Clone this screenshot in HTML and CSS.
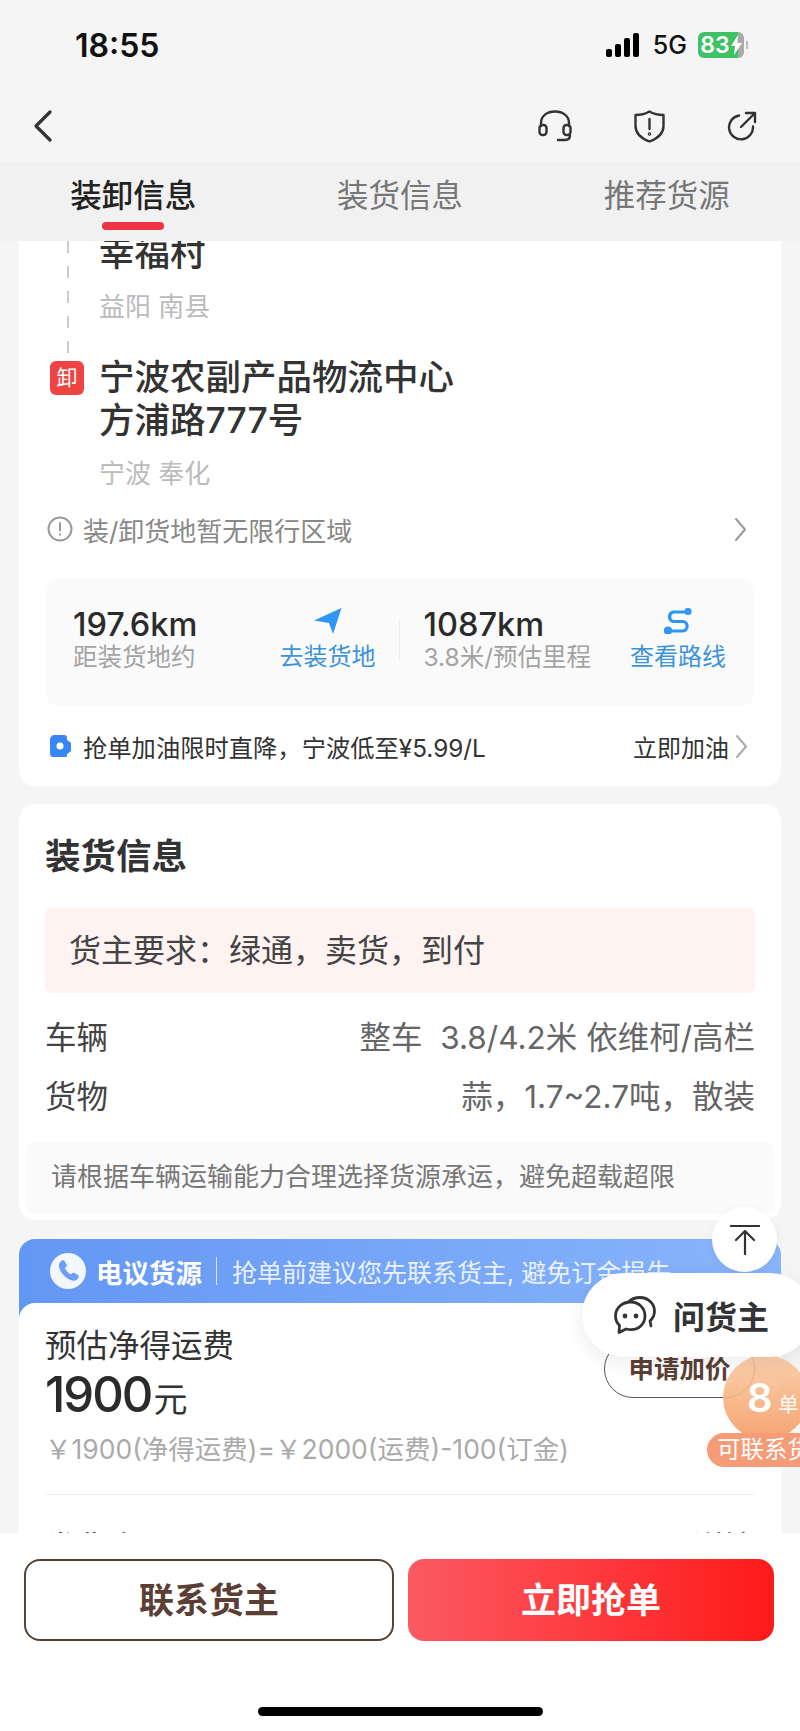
FILE: index.html
```html
<!DOCTYPE html>
<html lang="zh-CN">

<head>
  <meta charset="UTF-8" />
  <meta name="viewport" content="width=device-width, initial-scale=1.0" />
  <title>装卸信息</title>
  <link rel="stylesheet" href="styles.css">
</head>

<body>
  <div class="phone">
    <div class="status-bar">
      <span class="time">18:55</span>
      <div class="status-right">
        <svg class="signal" width="34" height="24" viewBox="0 0 34 24" fill="#000">
          <rect x="0" y="16" width="6" height="8" rx="2" />
          <rect x="9" y="11" width="6" height="13" rx="2" />
          <rect x="18" y="5" width="6" height="19" rx="2" />
          <rect x="27" y="0" width="6" height="24" rx="2" />
        </svg>
        <span class="net">5G</span>
        <div class="battery">
          <span>83</span>
          <svg width="11" height="20" viewBox="0 0 11 20" fill="#fff">
            <path d="M7 0 0 11h4l-1 9 8-12H6.500z" />
          </svg>
        </div>
        <i class="battery-nub"></i>
      </div>
    </div>

    <div class="nav">
      <svg width="20" height="32" viewBox="0 0 20 32" fill="none" stroke="#333" stroke-width="3.200" stroke-linecap="round" stroke-linejoin="round">
        <path d="M17 2 3 16l14 14" />
      </svg>
      <div class="nav-icons">
        <svg width="34" height="32" viewBox="0 0 34 32" fill="none" stroke="#333" stroke-width="2.400" stroke-linecap="round">
          <path d="M3 16v-3C3 6 9 1.500 17 1.500S31 6 31 13v3" />
          <rect x="1.500" y="15" width="7" height="10" rx="3" />
          <rect x="25.500" y="15" width="7" height="10" rx="3" />
          <path d="M32 25c0 3-2 5-5 5h-7" />
        </svg>
        <svg width="31" height="33" viewBox="0 0 31 33" fill="none" stroke="#333" stroke-width="2.400" stroke-linejoin="round" stroke-linecap="round">
          <path d="M15.500 1.500c4 2.500 8.500 3.500 14 3.500v11c0 8-6 12.500-14 15.500C7.500 28.500 1.500 24 1.500 16V5c5.500 0 10-1 14-3.500z" />
          <path d="M15.500 9v10" />
          <circle cx="15.500" cy="24" r=".6" />
        </svg>
        <svg width="30" height="30" viewBox="0 0 30 30" fill="none" stroke="#333" stroke-width="2.400" stroke-linecap="round" stroke-linejoin="round">
          <path d="M12 4.500a12 12 0 1 0 14 11" />
          <path d="M14 16 28 2M19 2h9v9" />
        </svg>
      </div>
    </div>

    <div class="tabs">
      <div class="tab tab-active">装卸信息<i class="tab-line"></i></div>
      <div class="tab">装货信息</div>
      <div class="tab">推荐货源</div>
    </div>

    <div class="content">
      <section class="card route-card">
        <div class="route">
          <div class="route-side"><i class="route-dash"></i></div>
          <div class="stop stop-first">
            <div class="stop-name">幸福村</div>
            <div class="stop-city">益阳 南县</div>
          </div>
          <div class="route-side"><span class="badge">卸</span></div>
          <div class="stop">
            <div class="stop-name">宁波农副产品物流中心<br>方浦路777号</div>
            <div class="stop-city">宁波 奉化</div>
          </div>
        </div>

        <div class="limit-row">
          <svg width="26" height="26" viewBox="0 0 26 26" fill="none" stroke="#999" stroke-width="2" stroke-linecap="round">
            <circle cx="13" cy="13" r="11.500" />
            <path d="M13 7v7.500M13 18.500v.2" />
          </svg>
          <span class="limit-text">装/卸货地暂无限行区域</span>
          <svg class="chevron" width="13" height="25" viewBox="0 0 13 25" fill="none" stroke="#999" stroke-width="2" stroke-linecap="round" stroke-linejoin="round">
            <path d="M2 2l9 10.500L2 23" />
          </svg>
        </div>

        <div class="panel">
          <div class="leg leg-first">
            <div>
              <div class="leg-value">197.6km</div>
              <div class="leg-sub">距装货地约</div>
            </div>
            <div class="leg-action">
              <svg width="28" height="26" viewBox="0 0 28 26" fill="#2f96f5">
                <path d="M27.500 0 0 12.500l15 2.500 4 11z" />
              </svg>
              <span>去装货地</span>
            </div>
          </div>
          <i class="leg-divider"></i>
          <div class="leg">
            <div>
              <div class="leg-value">1087km</div>
              <div class="leg-sub">3.8米/预估里程</div>
            </div>
            <div class="leg-action">
              <svg width="28" height="26" viewBox="0 0 28 26" fill="none" stroke="#2f96f5" stroke-width="3.200" stroke-linecap="round">
                <path d="M21 4H9a5 5 0 0 0 0 9.500h10a4.800 4.800 0 0 1 0 9.500H6" />
                <circle cx="24" cy="3.500" r="2" />
                <circle cx="4" cy="22.500" r="2.500" fill="#2f96f5" />
              </svg>
              <span>查看路线</span>
            </div>
          </div>
        </div>

        <div class="fuel-row">
          <svg width="21" height="22" viewBox="0 0 21 22">
            <path d="M5 0h9c2 0 3 1 3 3v2l3 2c.7.500 1 1 1 2v6c0 1-.300 1.500-1 2l-3 2v1c0 2-1 3-3 3H5c-3 0-5-2-5-5V5c0-3 2-5 5-5z" fill="#3a86f6" />
            <circle cx="10" cy="11" r="3.500" fill="#fff" />
          </svg>
          <span class="fuel-text">抢单加油限时直降，宁波低至¥5.99/L</span>
          <span class="fuel-link">立即加油</span>
          <svg class="chevron" width="13" height="25" viewBox="0 0 13 25" fill="none" stroke="#aaa" stroke-width="2" stroke-linecap="round" stroke-linejoin="round">
            <path d="M2 2l9 10.500L2 23" />
          </svg>
        </div>
      </section>

      <section class="card load-card">
        <h3 class="card-title">装货信息</h3>
        <div class="demand">货主要求：绿通，卖货，到付</div>
        <div class="info-row">
          <span class="info-label">车辆</span>
          <span class="info-value">整车&nbsp; 3.8/4.2米 依维柯/高栏</span>
        </div>
        <div class="info-row info-row-next">
          <span class="info-label">货物</span>
          <span class="info-value">蒜，1.7~2.7吨，散装</span>
        </div>
        <div class="note">请根据车辆运输能力合理选择货源承运，避免超载超限</div>
      </section>

      <section class="fare-card">
        <div class="fare-banner">
          <span class="phone-dot">
            <svg width="24" height="24" viewBox="0 0 24 24" fill="#6f9ff5">
              <path d="M6 1.500c1-.5 2-.3 2.600.6l2 3.400c.4.800.3 1.600-.3 2.200L9 9c.8 2.500 3 5 6 6.300l1.500-1.200c.7-.5 1.500-.6 2.200-.1l3.200 2.100c.9.600 1.100 1.700.5 2.600-1.200 2-3 3.300-5 3-7-1-13-7.500-14.400-14C2.500 5 3.800 2.800 6 1.500z" />
            </svg>
          </span>
          <span class="banner-name">电议货源</span>
          <i class="banner-sep"></i>
          <span class="banner-text">抢单前建议您先联系货主, 避免订金损失</span>
        </div>
        <div class="fare-body">
          <div class="fare-head">
            <div>
              <div class="fare-title">预估净得运费</div>
              <div class="fare-price"><span class="fare-num">1900</span><span class="fare-unit">元</span></div>
            </div>
            <div class="raise-btn">申请加价</div>
          </div>
          <div class="fare-formula">￥1900(净得运费)=￥2000(运费)-100(订金)</div>
          <div class="fare-line"></div>
          <div class="info-row fare-next">
            <span class="info-label">发货人</span>
            <span class="info-value">详情</span>
          </div>
        </div>
      </section>
    </div>

    <div class="bottom-bar">
      <div class="actions">
        <div class="btn btn-outline">联系货主</div>
        <div class="btn btn-red">立即抢单</div>
      </div>
      <i class="home-bar"></i>
    </div>

    <div class="to-top">
      <svg width="30" height="30" viewBox="0 0 30 30" fill="none" stroke="#333" stroke-width="2.200" stroke-linecap="round" stroke-linejoin="round">
        <path d="M1 1h28M15 29V7M6 15l9-9 9 9" />
      </svg>
    </div>

    <div class="orders">
      <span class="orders-num">8</span><span class="orders-unit">单</span>
    </div>
    <div class="orders-pill">可联系货主</div>

    <div class="ask">
      <svg width="42" height="38" viewBox="0 0 42 38" fill="none" stroke="#333" stroke-width="2.800" stroke-linecap="round" stroke-linejoin="round">
        <path d="M15 5.500C18 2.500 22 1.500 26 1.500c8 0 14.500 6 14.500 13.500 0 4-1.800 7.500-4.500 10l1 5" />
        <path d="M17 6C8 6 1.500 12 1.500 20c0 4 1.500 7 4 9.500l-.5 7 7-3.500c1.500.5 3 .7 5 .7 8 0 14-6 14-13.700S25 6 17 6z" />
        <circle cx="11" cy="20" r="1" fill="#333" />
        <circle cx="22" cy="20" r="1" fill="#333" />
      </svg>
      <span>问货主</span>
    </div>
  </div>
</body>

</html>
```

FILE: styles.css
```css
* {
  box-sizing: border-box;
}

body {
  margin: 0;
  font-family: "Inter", "Noto Sans CJK SC", sans-serif;
  color: #333;
}

i {
  display: block;
}

.phone {
  position: relative;
  width: 800px;
  height: 1731px;
  overflow: hidden;
  display: flex;
  flex-direction: column;
  background: #f5f5f5;
}

/* status bar */
.status-bar {
  height: 90px;
  flex: none;
  display: flex;
  align-items: center;
  justify-content: space-between;
  padding: 0 52px 0 75px;
}

.time {
  font-size: 32px;
  font-weight: 600;
  color: #111;
}

.status-right {
  display: flex;
  align-items: center;
}

.net {
  margin: 0 11px 0 13px;
  font-size: 25px;
  font-weight: 500;
  color: #111;
}

.battery {
  width: 46px;
  height: 26px;
  display: flex;
  align-items: center;
  justify-content: center;
  gap: 1px;
  border-radius: 6px;
  background: linear-gradient(90deg, #3fc266 87%, #aaa 87%);
  color: #fff;
  font-size: 23px;
  font-weight: 600;
}

.battery-nub {
  width: 2px;
  height: 8px;
  margin-left: 2px;
  background: #bbb;
}

/* nav */
.nav {
  height: 72px;
  flex: none;
  display: flex;
  align-items: center;
  justify-content: space-between;
  padding: 0 43px 0 33px;
}

.nav-icons {
  display: flex;
  align-items: center;
  gap: 62px;
}

/* tabs */
.tabs {
  height: 79px;
  flex: none;
  display: flex;
  background: #f1f1f1;
}

.tab {
  flex: 1;
  padding-top: 14px;
  line-height: 40px;
  font-size: 31.500px;
  text-align: center;
  color: #777;
}

.tab-active {
  color: #222;
  font-weight: 500;
}

.tab-line {
  width: 62px;
  height: 8px;
  margin: 6px auto 0;
  border-radius: 4px;
  background: #ee3344;
}

/* scrolling part */
.content {
  flex: 1;
  min-height: 0;
  overflow: hidden;
  padding: 0 19px;
}

.card {
  background: #fff;
  border-radius: 16px;
}

.route-card {
  height: 545px;
  padding-right: 27px;
  border-radius: 0 0 16px 16px;
}

.route {
  display: grid;
  grid-template-columns: 80px 1fr;
}

.route-dash {
  width: 2px;
  height: 115px;
  margin-left: 48px;
  background: repeating-linear-gradient(180deg, #ccc 0, #ccc 12px, transparent 12px, transparent 25px);
}

.badge {
  display: block;
  width: 34px;
  height: 34px;
  margin: 5px 0 0 31px;
  border-radius: 6px;
  background: #ee4444;
  color: #fff;
  font-size: 21px;
  line-height: 34px;
  text-align: center;
}

.stop-first {
  margin-top: -9px;
  padding-bottom: 31px;
}

.stop-name {
  font-size: 35.500px;
  line-height: 43px;
  font-weight: 500;
  color: #333;
}

.stop-city {
  margin-top: 15px;
  font-size: 26px;
  line-height: 34px;
  color: #bbb;
}

.limit-row {
  height: 40px;
  margin: 18px 7px 0 0;
  padding-left: 28px;
  display: flex;
  align-items: center;
}

.limit-text {
  margin-left: 10px;
  font-size: 26px;
  color: #888;
}

.chevron {
  margin-left: auto;
  flex: none;
}

.panel {
  height: 127px;
  margin: 30px 0 0 27px;
  padding-top: 29px;
  display: flex;
  align-items: flex-start;
  border-radius: 12px;
  background: #fafafa;
}

.leg {
  flex: 1;
  display: flex;
  justify-content: space-between;
  padding: 0 28px 0 24px;
}

.leg-first {
  padding: 0 23px 0 27px;
}

.leg-divider {
  width: 1px;
  height: 38px;
  margin-top: 13px;
  background: #ebebeb;
}

.leg-value {
  font-size: 32.500px;
  line-height: 34px;
  font-weight: 500;
  color: #2b2b2b;
}

.leg-sub {
  font-size: 24.500px;
  line-height: 30px;
  color: #a3a3a3;
}

.leg-action {
  display: flex;
  flex-direction: column;
  align-items: center;
  gap: 8px;
  font-size: 24px;
  line-height: 30px;
  color: #3d93d8;
}

.fuel-row {
  height: 40px;
  margin: 20px 6px 0 31px;
  display: flex;
  align-items: center;
}

.fuel-text {
  margin-left: 12px;
  font-size: 24.300px;
  color: #333;
}

.fuel-link {
  margin-left: auto;
  font-size: 24px;
  color: #333;
}

.fuel-row .chevron {
  margin-left: 6px;
}

.load-card {
  margin-top: 18px;
  padding: 33px 26px 7px;
}

.card-title {
  margin: 0;
  font-size: 35.500px;
  line-height: 40px;
  font-weight: 700;
  color: #333;
}

.demand {
  height: 85px;
  margin-top: 31px;
  padding-left: 24px;
  border-radius: 6px;
  background: #fff3f2;
  font-size: 32px;
  line-height: 85px;
  color: #444;
}

.info-row {
  margin-top: 23px;
  display: flex;
  justify-content: space-between;
  font-size: 31.500px;
  line-height: 44px;
}

.info-row-next {
  margin-top: 15px;
}

.info-label {
  color: #444;
}

.info-value {
  color: #666;
}

.note {
  height: 71px;
  margin: 23px -19px 0;
  padding-left: 25px;
  border-radius: 8px;
  background: #fafafa;
  font-size: 26px;
  line-height: 70px;
  color: #777;
}

/* fare card */
.fare-card {
  margin-top: 19px;
  border-radius: 16px 16px 0 0;
  background: linear-gradient(90deg, #6397f4, #8ab5fb);
}

.fare-banner {
  height: 64px;
  padding-left: 31px;
  display: flex;
  align-items: center;
  color: #fff;
}

.phone-dot {
  width: 36px;
  height: 36px;
  display: flex;
  align-items: center;
  justify-content: center;
  border-radius: 50%;
  background: #f2f6ff;
}

.banner-name {
  margin-left: 10px;
  font-size: 26.500px;
  font-weight: 700;
}

.banner-sep {
  width: 1px;
  height: 28px;
  margin: 0 15px 0 14px;
  background: #dbe6ff;
}

.banner-text {
  font-size: 25px;
  color: #eaf1ff;
  white-space: nowrap;
}

.fare-body {
  height: 400px;
  padding: 23px 26px 0;
  border-radius: 16px 16px 0 0;
  background: #fff;
}

.fare-head {
  display: flex;
  justify-content: space-between;
  align-items: flex-start;
}

.fare-title {
  font-size: 31.500px;
  line-height: 40px;
  color: #333;
}

.fare-price {
  margin-top: 1px;
  line-height: 56px;
}

.fare-num {
  font-size: 49px;
  font-weight: 500;
  letter-spacing: -2px;
  color: #2b2b2b;
}

.fare-unit {
  margin-left: 2px;
  font-size: 34px;
  color: #333;
}

.raise-btn {
  width: 151px;
  height: 58px;
  margin-top: 14px;
  border: 1px solid #555;
  border-radius: 29px;
  font-size: 25.500px;
  font-weight: 700;
  line-height: 56px;
  text-align: center;
  color: #5b3f35;
}

.fare-formula {
  margin-top: -3px;
  font-size: 26.500px;
  line-height: 36px;
  color: #aaa;
  white-space: nowrap;
}

.fare-line {
  height: 1px;
  margin-top: 27px;
  background: #efefef;
}

.fare-next {
  margin-top: 33px;
  line-height: 40px;
}

/* bottom bar */
.bottom-bar {
  height: 198px;
  flex: none;
  display: flex;
  flex-direction: column;
  background: #fff;
}

.actions {
  margin-top: 26px;
  padding: 0 26px 0 24px;
  display: flex;
  gap: 14px;
}

.btn {
  flex: 1;
  height: 82px;
  border-radius: 16px;
  font-size: 35px;
  font-weight: 700;
  line-height: 82px;
  text-align: center;
}

.btn-outline {
  border: 2px solid #5a4038;
  line-height: 78px;
  color: #5b3f35;
}

.btn-red {
  background: linear-gradient(90deg, #fb5a62, #ff1a1a);
  color: #fff;
}

.home-bar {
  width: 285px;
  height: 9px;
  margin: 66px auto 0;
  border-radius: 5px;
  background: #000;
}

/* floating items */
.to-top {
  position: absolute;
  left: 712px;
  top: 1207px;
  width: 65px;
  height: 65px;
  display: flex;
  align-items: center;
  justify-content: center;
  border-radius: 50%;
  background: #fff;
  box-shadow: 0 2px 8px rgba(0, 0, 0, .06);
}

.ask {
  position: absolute;
  left: 582px;
  top: 1273px;
  width: 230px;
  height: 84px;
  padding-left: 32px;
  display: flex;
  align-items: center;
  gap: 17px;
  border-radius: 42px;
  background: #fff;
  box-shadow: 0 6px 20px rgba(0, 0, 0, .08);
  font-size: 32px;
  font-weight: 700;
  color: #333;
}

.orders {
  position: absolute;
  left: 723px;
  top: 1355px;
  width: 85px;
  height: 85px;
  padding: 14px 0 0 24px;
  border-radius: 50%;
  background: linear-gradient(180deg, rgba(250, 200, 160, .85), rgba(245, 160, 105, .95));
  color: #fff;
}

.orders-num {
  font-size: 40px;
  font-weight: 600;
  line-height: 58px;
}

.orders-unit {
  margin-left: 6px;
  font-size: 20px;
}

.orders-pill {
  position: absolute;
  left: 707px;
  top: 1433px;
  width: 130px;
  height: 34px;
  padding-left: 10px;
  border-radius: 17px;
  background: #f59b75;
  color: #fff;
  font-size: 23.500px;
  line-height: 34px;
  white-space: nowrap;
}
```
